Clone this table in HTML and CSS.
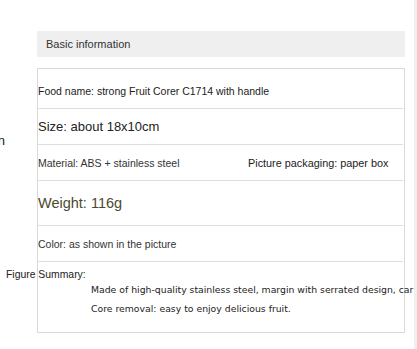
FILE: index.html
```html
<!DOCTYPE html>
<html>
<head>
<meta charset="utf-8">
<link rel="stylesheet" href="styles.css">
</head>
<body>
<div class="page">
  <div class="side"><span class="side-label">Description</span></div>
  <div class="main">
    <div class="heading">Basic information</div>
    <div class="table">
      <div class="row r1"><span class="t10">Food name: strong Fruit Corer C1714 with handle</span></div>
      <div class="row r2"><span class="t13">Size: about 18x10cm</span></div>
      <div class="row r3"><span class="t9 mat">Material: ABS + stainless steel</span><span class="t11">Picture packaging: paper box</span></div>
      <div class="row r4"><span class="t14 olive">Weight: 116g</span></div>
      <div class="row r5"><span class="t9">Color: as shown in the picture</span></div>
      <div class="summary">
        <div class="sum-label">Figure Summary:</div>
        <div class="sum-line">Made of high-quality stainless steel, margin with serrated design, car</div>
        <div class="sum-line">Core removal: easy to enjoy delicious fruit.</div>
      </div>
    </div>
  </div>
</div>
</body>
</html>
```

FILE: styles.css
```css
html, body {
  margin: 0;
  padding: 0;
  background: #fff;
  overflow: hidden;
  height: 349px;
}
body {
  font-family: "Liberation Sans", Arial, sans-serif;
  color: #333;
}
body::after {
  content: "";
  position: fixed;
  top: 0;
  right: 0;
  width: 3px;
  height: 100%;
  background: #efefef;
}
.page {
  display: flex;
  padding-top: 31px;
}
.side {
  width: 37px;
  flex: none;
  display: flex;
  justify-content: flex-end;
  padding-right: 32px;
  box-sizing: border-box;
}
.side-label {
  flex: none;
  white-space: nowrap;
  font-size: 13px;
  margin-top: 102px;
  height: 16px;
  color: #222;
}
.main {
  width: 368px;
  flex: none;
}
.heading {
  height: 26px;
  line-height: 26px;
  background: #efefef;
  padding-left: 9px;
  font-size: 11px;
  color: #333;
}
.table {
  margin-top: 11px;
  border: 1px solid #d9d9d9;
  height: 265px;
  box-sizing: border-box;
}
.row {
  display: flex;
  align-items: center;
  border-bottom: 1px solid #dedede;
  box-sizing: border-box;
  margin-right: 1px;
}
.r1 { height: 40px; padding-top: 4px; box-sizing: border-box; }
.r2 { height: 36px; }
.r3 { height: 36px; padding-top: 1px; }
.r4 { height: 45px; }
.r5 { height: 36px; }
.t9 { font-size: 10.5px; }
.t10 { font-size: 10.5px; color: #222; }
.t11 { font-size: 10.85px; color: #222; }
.t13 { font-size: 13px; color: #222; }
.t14 { font-size: 14.5px; }
.olive { color: #4a4a2e; }
.mat { width: 210px; flex: none; }
.summary {
  padding-top: 6px;
}
.sum-label {
  margin-left: -32px;
  font-size: 10.4px;
  color: #222;
  line-height: 13px;
}
.sum-line {
  margin-left: 53px;
  font-family: "DejaVu Sans", sans-serif;
  font-size: 9.3px;
  color: #222;
  white-space: nowrap;
  line-height: 13px;
  margin-top: 2px;
}
.sum-line + .sum-line {
  margin-top: 6px;
}
```
